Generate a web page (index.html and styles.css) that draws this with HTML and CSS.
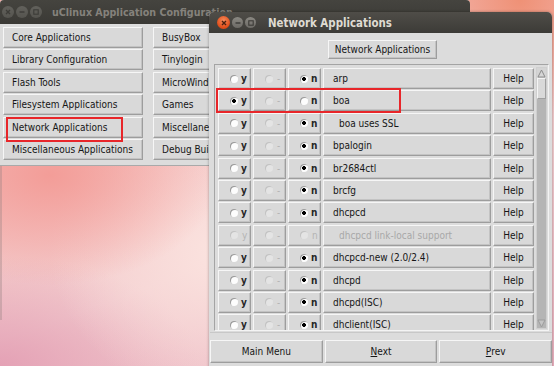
FILE: index.html
```html
<!DOCTYPE html>
<html lang="en">
<head>
  <meta charset="UTF-8" />
  <title>uClinux Application Configuration</title>
  <link rel="stylesheet" href="styles.css">
</head>
<body>

<div class="desktop">

  <!-- edge of a window further behind -->
  <div class="win-edge"></div>

  <!-- main menu window (inactive) -->
  <div class="win win-back">
    <div class="titlebar inactive">
      <div class="tb-buttons">
        <span class="tb-btn tb-close"><svg width="6" height="6" viewBox="0 0 6 6"><path d="M1 1 L5 5 M5 1 L1 5" stroke="currentColor" stroke-width="1.4"/></svg></span>
        <span class="tb-btn tb-min"><svg width="6" height="6" viewBox="0 0 6 6"><path d="M0.5 3 H5.5" stroke="currentColor" stroke-width="1.4"/></svg></span>
        <span class="tb-btn tb-max"><svg width="6" height="6" viewBox="0 0 6 6"><rect x="0.8" y="0.8" width="4.4" height="4.4" fill="none" stroke="currentColor" stroke-width="1.1"/></svg></span>
      </div>
      <span class="title">uClinux Application Configuration</span>
    </div>
    <div class="menu-grid">
      <button class="tkbtn">Core Applications</button>
      <button class="tkbtn">Library Configuration</button>
      <button class="tkbtn">Flash Tools</button>
      <button class="tkbtn">Filesystem Applications</button>
      <button class="tkbtn">Network Applications</button>
      <button class="tkbtn">Miscellaneous Applications</button>
      <button class="tkbtn">BusyBox</button>
      <button class="tkbtn">Tinylogin</button>
      <button class="tkbtn">MicroWindows</button>
      <button class="tkbtn">Games</button>
      <button class="tkbtn">Miscellaneous Configuration</button>
      <button class="tkbtn">Debug Builds</button>
    </div>
  </div>

  <!-- Network Applications window -->
  <div class="win win-front">
    <div class="titlebar">
      <div class="tb-buttons">
        <span class="tb-btn tb-close"><svg width="6" height="6" viewBox="0 0 6 6"><path d="M1 1 L5 5 M5 1 L1 5" stroke="currentColor" stroke-width="1.4"/></svg></span>
        <span class="tb-btn tb-min"><svg width="6" height="6" viewBox="0 0 6 6"><path d="M0.5 3 H5.5" stroke="currentColor" stroke-width="1.4"/></svg></span>
        <span class="tb-btn tb-max"><svg width="6" height="6" viewBox="0 0 6 6"><rect x="0.8" y="0.8" width="4.4" height="4.4" fill="none" stroke="currentColor" stroke-width="1.1"/></svg></span>
      </div>
      <span class="title">Network Applications</span>
    </div>

    <div class="front-body">
      <div class="head">
        <button class="tkbtn head-btn">Network Applications</button>
      </div>

      <div class="list-frame">
        <div class="rows">
          <div class="row">
            <span class="tkbtn opt"><i class="radio"></i>y</span>
            <span class="tkbtn opt off"><i class="radio"></i>-</span>
            <span class="tkbtn opt"><i class="radio on"></i>n</span>
            <span class="tkbtn label">arp</span>
            <span class="tkbtn help">Help</span>
          </div>
          <div class="row">
            <span class="tkbtn opt"><i class="radio on"></i>y</span>
            <span class="tkbtn opt off"><i class="radio"></i>-</span>
            <span class="tkbtn opt"><i class="radio"></i>n</span>
            <span class="tkbtn label">boa</span>
            <span class="tkbtn help">Help</span>
          </div>
          <div class="row">
            <span class="tkbtn opt"><i class="radio"></i>y</span>
            <span class="tkbtn opt off"><i class="radio"></i>-</span>
            <span class="tkbtn opt"><i class="radio on"></i>n</span>
            <span class="tkbtn label sub">boa uses SSL</span>
            <span class="tkbtn help">Help</span>
          </div>
          <div class="row">
            <span class="tkbtn opt"><i class="radio"></i>y</span>
            <span class="tkbtn opt off"><i class="radio"></i>-</span>
            <span class="tkbtn opt"><i class="radio on"></i>n</span>
            <span class="tkbtn label">bpalogin</span>
            <span class="tkbtn help">Help</span>
          </div>
          <div class="row">
            <span class="tkbtn opt"><i class="radio"></i>y</span>
            <span class="tkbtn opt off"><i class="radio"></i>-</span>
            <span class="tkbtn opt"><i class="radio on"></i>n</span>
            <span class="tkbtn label">br2684ctl</span>
            <span class="tkbtn help">Help</span>
          </div>
          <div class="row">
            <span class="tkbtn opt"><i class="radio"></i>y</span>
            <span class="tkbtn opt off"><i class="radio"></i>-</span>
            <span class="tkbtn opt"><i class="radio on"></i>n</span>
            <span class="tkbtn label">brcfg</span>
            <span class="tkbtn help">Help</span>
          </div>
          <div class="row">
            <span class="tkbtn opt"><i class="radio"></i>y</span>
            <span class="tkbtn opt off"><i class="radio"></i>-</span>
            <span class="tkbtn opt"><i class="radio on"></i>n</span>
            <span class="tkbtn label">dhcpcd</span>
            <span class="tkbtn help">Help</span>
          </div>
          <div class="row">
            <span class="tkbtn opt off"><i class="radio"></i>y</span>
            <span class="tkbtn opt off"><i class="radio"></i>-</span>
            <span class="tkbtn opt off"><i class="radio"></i>n</span>
            <span class="tkbtn label sub off">dhcpcd link-local support</span>
            <span class="tkbtn help">Help</span>
          </div>
          <div class="row">
            <span class="tkbtn opt"><i class="radio"></i>y</span>
            <span class="tkbtn opt off"><i class="radio"></i>-</span>
            <span class="tkbtn opt"><i class="radio on"></i>n</span>
            <span class="tkbtn label">dhcpcd-new (2.0/2.4)</span>
            <span class="tkbtn help">Help</span>
          </div>
          <div class="row">
            <span class="tkbtn opt"><i class="radio"></i>y</span>
            <span class="tkbtn opt off"><i class="radio"></i>-</span>
            <span class="tkbtn opt"><i class="radio on"></i>n</span>
            <span class="tkbtn label">dhcpd</span>
            <span class="tkbtn help">Help</span>
          </div>
          <div class="row">
            <span class="tkbtn opt"><i class="radio"></i>y</span>
            <span class="tkbtn opt off"><i class="radio"></i>-</span>
            <span class="tkbtn opt"><i class="radio on"></i>n</span>
            <span class="tkbtn label">dhcpd(ISC)</span>
            <span class="tkbtn help">Help</span>
          </div>
          <div class="row">
            <span class="tkbtn opt"><i class="radio"></i>y</span>
            <span class="tkbtn opt off"><i class="radio"></i>-</span>
            <span class="tkbtn opt"><i class="radio on"></i>n</span>
            <span class="tkbtn label">dhclient(ISC)</span>
            <span class="tkbtn help">Help</span>
          </div>
        </div>

        <div class="scrollbar">
          <span class="arrow">
            <svg width="9" height="9" viewBox="0 0 9 9"><path d="M4.5 1 L8 8 L1 8 Z" fill="#d6d6d6" stroke="#8c8c8c" stroke-width="1"/></svg>
          </span>
          <span class="thumb"></span>
          <span class="track"></span>
          <span class="arrow">
            <svg width="9" height="9" viewBox="0 0 9 9"><path d="M1 1 L8 1 L4.5 8 Z" fill="#c4c4c4" stroke="#9c9c9c" stroke-width="1"/></svg>
          </span>
        </div>
      </div>

      <div class="footer">
        <button class="tkbtn foot-btn">Main Menu</button>
        <button class="tkbtn foot-btn"><u>N</u>ext</button>
        <button class="tkbtn foot-btn"><u>P</u>rev</button>
      </div>
    </div>
  </div>

  <!-- red highlight boxes -->
  <div class="mark mark-menu"></div>
  <div class="mark mark-boa"></div>
</div>

</body>
</html>
```

FILE: styles.css
```css
html, body {
  margin: 0;
  padding: 0;
}
body {
  font-family: 'DejaVu Sans Condensed', 'DejaVu Sans', sans-serif;
  font-stretch: condensed;
  font-size: 10px;
  color: #161616;
}
.desktop {
  position: relative;
  width: 554px;
  height: 366px;
  overflow: hidden;
  background:
    radial-gradient(circle at 520px 0px, #ef9176 0, rgba(239,145,118,0) 120px),
    radial-gradient(ellipse 170px 110px at 50px 175px, #f39d98 0, rgba(243,157,152,0) 100%),
    radial-gradient(ellipse 170px 150px at 220px 250px, #fbe3df 0, rgba(251,227,223,0) 100%),
    radial-gradient(ellipse 200px 110px at 0px 366px, #e4a1b5 0, rgba(228,161,181,0) 100%),
    linear-gradient(160deg, #f5b0ab, #f3ced0 60%, #eab1bf);
}
.win-edge {
  position: absolute;
  left: 0;
  top: 165px;
  width: 2px;
  height: 155px;
  background: rgba(150,130,130,0.35);
}

/* windows */
.win {
  position: absolute;
  background: #dcdcdc;
}
.win-back {
  left: 0;
  top: 0;
  width: 470px;
  height: 165px;
  border-bottom: 1px solid #a9a9a9;
  border-radius: 4px 4px 0 0;
}
.win-front {
  left: 209px;
  top: 12px;
  width: 343px;
  height: 360px;
  border-radius: 5px 5px 0 0;
  box-shadow: 0 0 3px rgba(0,0,0,0.35);
}

.titlebar {
  display: flex;
  align-items: center;
  height: 21px;
  background: linear-gradient(#4f4d48, #3c3b37);
  border-radius: 5px 5px 0 0;
  color: #dfdbd2;
  font-weight: bold;
  font-size: 11.4px;
}
.titlebar.inactive {
  height: 24px;
  background: linear-gradient(#45443f, #3a3935);
  color: #85827c;
  font-size: 10.6px;
  border-radius: 4px 4px 0 0;
}
.tb-buttons {
  display: flex;
  align-items: center;
  gap: 2px;
  width: 59px;
  padding-left: 8px;
  box-sizing: border-box;
}
.tb-btn {
  display: flex;
  align-items: center;
  justify-content: center;
  width: 11px;
  height: 11px;
  border-radius: 50%;
  background: linear-gradient(#8a8882, #6c6a65);
  color: #3c3b37;
}
.tb-close {
  width: 13px;
  height: 13px;
  background: radial-gradient(circle at 50% 35%, #f68b5c, #df4a16 70%);
  color: #4a2010;
}
.inactive .tb-buttons {
  width: 52px;
  padding-left: 2px;
}
.inactive .tb-btn {
  width: 12px;
  height: 12px;
  background: linear-gradient(#62615c, #55544f);
  color: #3d3c38;
}

/* Tk style raised button */
.tkbtn {
  display: flex;
  align-items: center;
  box-sizing: border-box;
  margin: 0;
  padding: 0 8px;
  background: #d9d9d9;
  border: 1px solid;
  border-color: #f6f6f6 #9d9d9d #9d9d9d #f6f6f6;
  box-shadow: inset -1px -1px 0 #c3c3c3;
  font: inherit;
  color: inherit;
  white-space: nowrap;
  overflow: hidden;
}

/* back window menu */
.menu-grid {
  display: grid;
  grid-template-columns: 140px 140px;
  grid-template-rows: repeat(6, 21px);
  grid-auto-flow: column;
  column-gap: 10px;
  row-gap: 1.4px;
  padding: 3px 0 0 3px;
}

/* front window */
.front-body {
  padding: 0 3px 0 5px;
}
.head {
  display: flex;
  justify-content: center;
  padding: 7px 0 5px 0;
  margin-right: -2px;
}
.head-btn {
  height: 19px;
  width: 109px;
  justify-content: center;
  padding: 0;
}

.list-frame {
  display: flex;
  gap: 2px;
  height: 267px;
  box-sizing: border-box;
  padding: 3px 2px 1px 3px;
  border: 1px solid;
  border-color: #a4a4a4 #f4f4f4 #f4f4f4 #a4a4a4;
  overflow: hidden;
}
.rows {
  display: grid;
  grid-auto-rows: 21px;
  row-gap: 1.4px;
  align-content: start;
}
.row {
  display: grid;
  grid-template-columns: 33px 33px 33px 168px 41px;
  column-gap: 2px;
}
.opt {
  padding-left: 11px;
  gap: 3px;
  font-weight: bold;
  color: #262626;
}
.opt.off {
  color: #b4b4b4;
  font-weight: normal;
  gap: 4px;
}
.radio {
  display: inline-block;
  flex: none;
  width: 8px;
  height: 8px;
  border-radius: 50%;
  background: #fdfdfd;
  box-shadow: inset 1px 1px 0 #9a9a9a;
}
.radio.on {
  background: radial-gradient(circle, #000 0 1.6px, #fdfdfd 2.2px);
}
.off .radio {
  background: #e4e4e4;
  box-shadow: inset 1px 1px 0 #c2c2c2;
}
.label {
  padding-left: 9px;
}
.label.sub {
  padding-left: 15px;
}
.label.off {
  color: #a8a8a8;
}
.help {
  justify-content: center;
  padding: 0;
}

.scrollbar {
  display: flex;
  flex-direction: column;
  width: 10px;
  margin-top: -1px;
  background: #b5b5b5;
  border: 1px solid #cfcfcf;
}
.arrow {
  display: flex;
  justify-content: center;
  align-items: center;
  height: 10px;
  background: #d4d4d4;
}
.scrollbar .arrow:last-child {
  background: #b5b5b5;
}
.thumb {
  height: 21px;
  background: #d9d9d9;
  border: 1px solid;
  border-color: #f4f4f4 #a0a0a0 #a0a0a0 #f4f4f4;
  box-sizing: border-box;
}
.track {
  flex: 1;
}

.footer {
  display: flex;
  gap: 2px;
  margin: 1px -3px 0 -4px;
  padding-top: 7px;
  border-top: 1px solid #c8c8c8;
}
.foot-btn {
  flex: 1;
  height: 23px;
  justify-content: center;
  padding: 0;
}
.foot-btn u {
  text-underline-offset: 1px;
}

/* red highlight boxes drawn over the screenshot */
.mark {
  position: absolute;
  box-sizing: border-box;
  border: 2px solid #e8262a;
}
.mark-menu {
  left: 6px;
  top: 117px;
  width: 117px;
  height: 25px;
}
.mark-boa {
  left: 216px;
  top: 88px;
  width: 185px;
  height: 25px;
}
```
